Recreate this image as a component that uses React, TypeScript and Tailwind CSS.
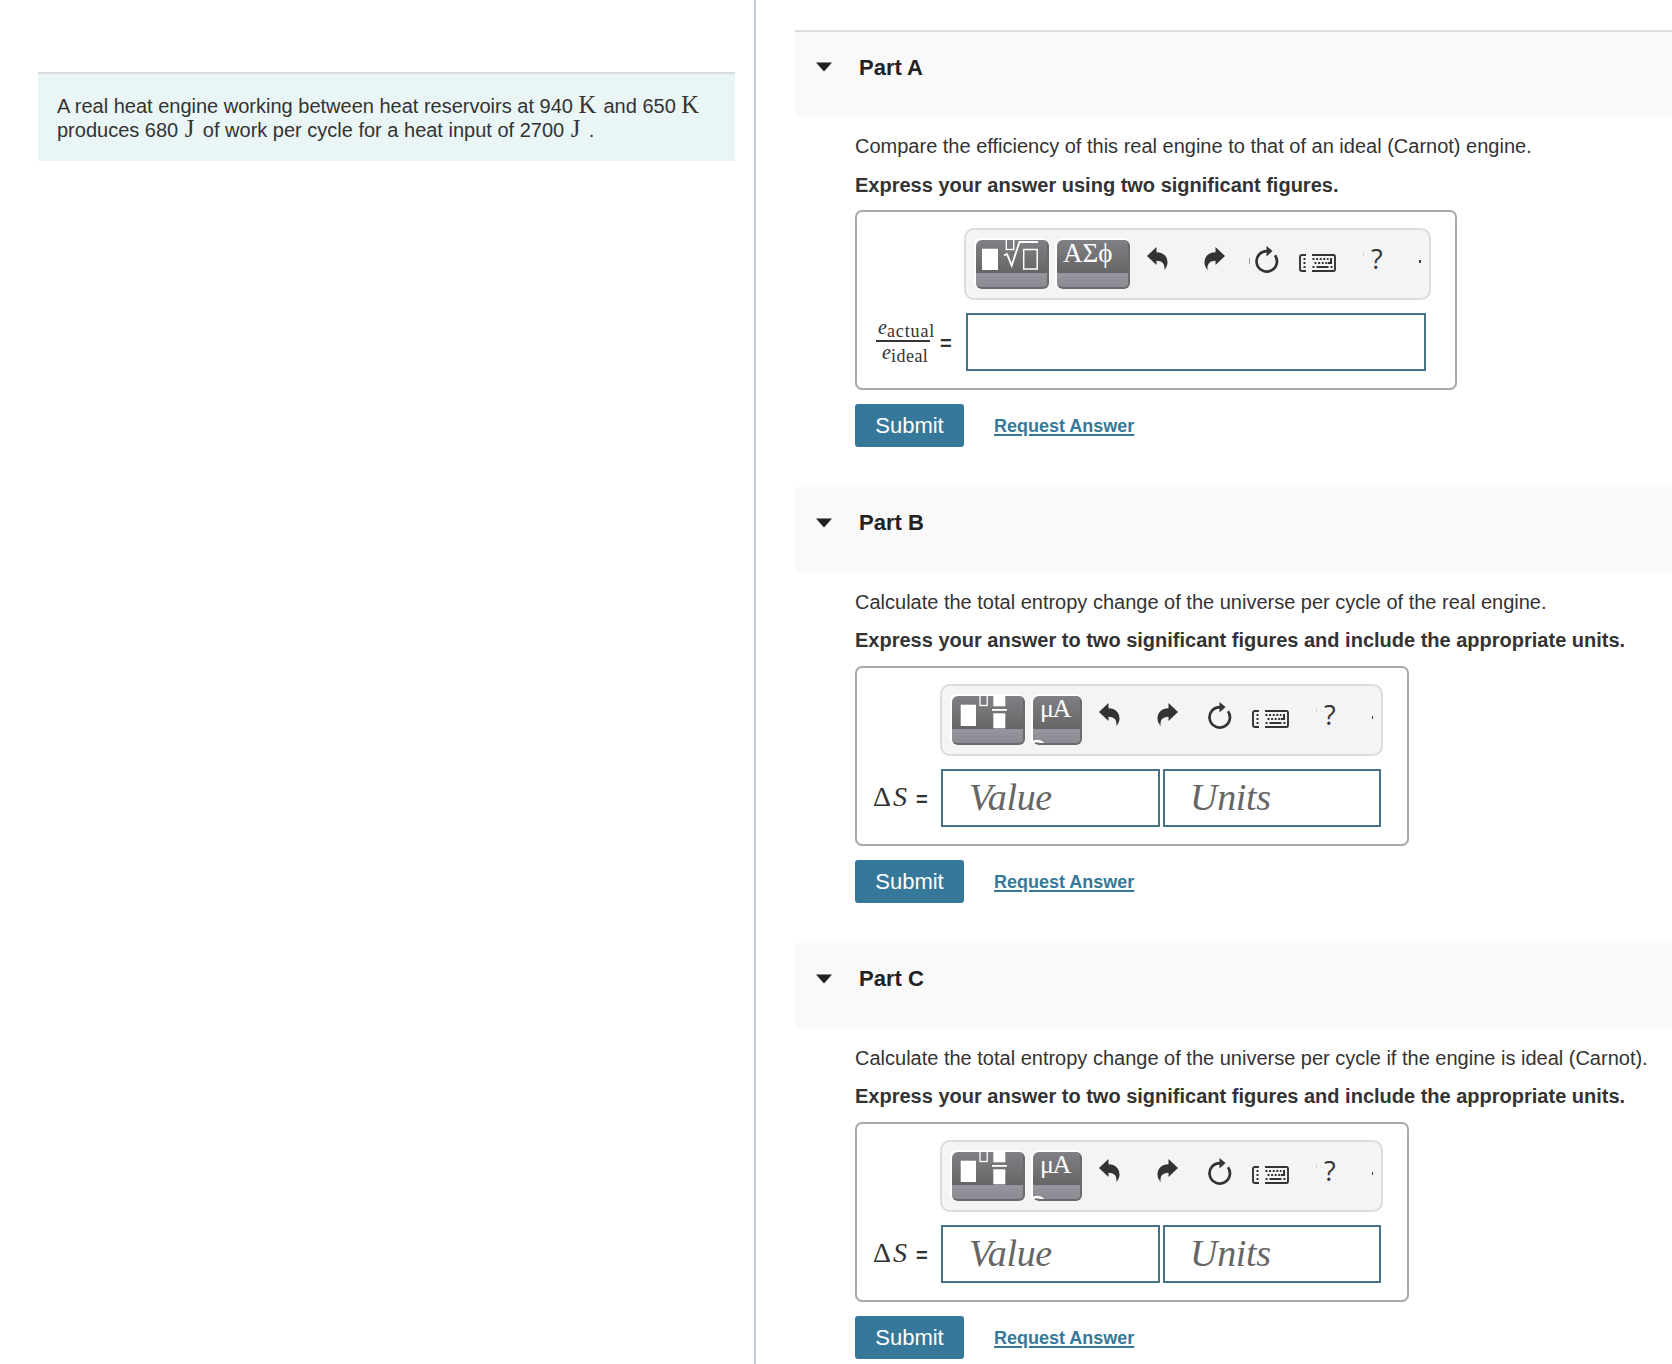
import type {ReactNode} from "react";

function UndoIcon({flip}: { flip?: boolean }) {
    return (
        <svg width="21" height="24" viewBox="0 0 21 24" className={flip ? "-scale-x-100" : ""}>
            <path d="M0 9 9.500 0v5.200C16.500 5.200 20.500 9.500 20.500 15.500c0 3-1.200 5.200-3.200 7.500 1-5.500-1.700-9.200-7.800-9.200V18z" fill="#333"/>
        </svg>
    );
}

function ResetIcon() {
    return (
        <svg width="24" height="27" viewBox="0 0 24 27">
            <path d="M20 9.300A10.200 10.200 0 1 1 12.500 5.100" fill="none" stroke="#333" strokeWidth="2.700"/>
            <path d="M11.500 0 17.500 5 11.500 10.500z" fill="#333"/>
        </svg>
    );
}

function KeyboardIcon() {
    return (
        <svg width="37" height="18" viewBox="0 0 37 18" fill="#333">
            <path d="M7 1H3Q1 1 1 3v12q0 2 2 2h4M13 1h21.500q1.500 0 1.500 2v12q0 2-1.500 2H13" fill="none" stroke="#333" strokeWidth="1.900"/>
            <path d="M4.500 4h2v2h-2zM4.500 8h2v2h-2zM4.500 12h2v2h-2zM13.500 12h2v2h-2zM17.500 12h12v2h-12zM31.500 12h2v2h-2z"/>
            <path d="M13.500 5h16M15.500 9h14" stroke="#333" strokeWidth="2" strokeDasharray="2 1.600"/>
            <path d="M31 4h2v6h-4V8h2z"/>
        </svg>
    );
}

function ToolButton({wide, children}: { wide?: boolean; children: ReactNode }) {
    return (
        <button className={(wide ? "w-[73px]" : "w-[49px]") + " relative flex h-[49px] shrink-0 items-start rounded-[6px] border-r-2 border-b-2 border-[#6a6a6c] bg-[linear-gradient(#818185_0,#656567_33px,#97969f_33px,#8b8a93_100%)] font-['Liberation_Serif',serif] text-white shadow-[-1px_-1px_0_1px_#fff]"}>
            {children}
        </button>
    );
}

function RootIcon() {
    return (
        <svg width="71" height="47" viewBox="0 0 71 47" fill="none" stroke="#fff" className="block shrink-0">
            <rect x="6" y="8.700" width="16" height="21.300" fill="#fff" stroke="none"/>
            <rect x="30.300" y="-3" width="7.400" height="12.500" strokeWidth="1.400"/>
            <path d="M28 15.500l3-1.500 4.700 11.500L43.500 2H62" strokeWidth="1.900"/>
            <rect x="47.700" y="9.500" width="13.500" height="19.500" strokeWidth="1.500"/>
        </svg>
    );
}

function FractionIcon() {
    return (
        <svg width="71" height="47" viewBox="0 0 71 47" fill="#fff" className="block shrink-0">
            <rect x="8.700" y="8.700" width="15.300" height="21.300"/>
            <rect x="28" y="-3" width="7.200" height="12.500" fill="none" stroke="#fff" strokeWidth="1.300"/>
            <rect x="41.300" y="0" width="12" height="10.300"/>
            <rect x="40" y="13" width="15" height="1.800"/>
            <rect x="41.300" y="17.300" width="12" height="15"/>
        </svg>
    );
}

function Toolbar({units}: { units?: boolean }) {
    return (
        <div className={(units ? "w-[443px]" : "w-[467px]") + " flex h-[72px] rounded-[10px] border-2 border-[#dcdcdc] bg-[#f4f4f4] pt-[10px] pl-[10px]"}>
            <ToolButton wide>{units ? <FractionIcon/> : <RootIcon/>}</ToolButton>
            <div className="w-2 shrink-0"/>
            {units ? (
                <ToolButton>
                    <div className="pl-[7px] text-[26px] leading-[25px] tracking-[-1.5px]">μA</div>
                    <svg width="12" height="4" viewBox="0 0 12 4" className="absolute bottom-0 left-0">
                        <path d="M0 1.500Q7-1 11.500 4H7Q4 2.500 0 4z" fill="#fff"/>
                    </svg>
                </ToolButton>
            ) : (
                <ToolButton wide>
                    <div className="pl-[6px] text-[27px] leading-[26px]">ΑΣϕ</div>
                </ToolButton>
            )}
            <div className="flex shrink-0 pt-[7px]">
                <div className="ml-[17px]"><UndoIcon/></div>
                <div className={units ? "ml-[37px]" : "ml-9"}><UndoIcon flip/></div>
                <div className={(units ? "bg-transparent" : "bg-[#999]") + " mt-[11px] ml-6 h-[6px] w-px"}/>
                <div className="-mt-px ml-[5px]"><ResetIcon/></div>
                <div className="mt-[7px] ml-[20px]"><KeyboardIcon/></div>
                <div className="mt-[6px] ml-[27px] h-[3px] w-px bg-[#ccc]"/>
                <div className="ml-[7px] font-['Open_Sans',sans-serif] text-[27px] leading-[24px] text-[#333]">?</div>
                <div className={(units ? "w-px" : "w-[2px]") + " mt-[13px] ml-[36px] h-[3px] bg-[#444]"}/>
            </div>
        </div>
    );
}

function Field({label}: { label: string }) {
    return (
        <div className={(label === "Value" ? "w-[219px] pl-[26px]" : "w-[218px] pl-[25px]") + " h-[58px] border-2 border-[#45738a] font-['Liberation_Serif',serif] text-[38px] leading-[52px] tracking-[-0.3px] text-[#666] italic"}>
            {label}
        </div>
    );
}

function Efficiency({sub}: { sub: string }) {
    return (
        <>
            <i className="text-[20px]">e</i>
            <span className={(sub === "ideal" ? "tracking-[0.5px]" : "tracking-[0.9px]") + " align-[-3px] text-[18px] leading-[0]"}>{sub}</span>
        </>
    );
}

function Part({name, question, hint, units}: { name: string; question: string; hint: string; units?: boolean }) {
    return (
        <section className={units ? "mt-px h-[455px]" : "h-[456px]"}>
            <div className={(units ? "h-[86px] pt-px" : "h-[87px] border-t-2 border-[#dcdcdc]") + " flex items-start bg-[#f9f9f9] pl-[21px]"}>
                <svg width="16" height="10" viewBox="0 0 16 10" className="mt-[30px]">
                    <path d="M0 .5h16L8 9.500z" fill="#222"/>
                </svg>
                <h2 className={(units ? "pt-[20px]" : "pt-[21px]") + " ml-[27px] text-[22px] leading-[30px] font-bold text-[#222]"}>{name}</h2>
            </div>
            <div className="pl-[60px] whitespace-nowrap text-[#333]">
                <p className="pt-[17px] text-[20px] leading-[24px]">{question}</p>
                <p className={(units ? "pt-[14px] pb-px" : "pt-[15px]") + " text-[20px] leading-[24px] font-bold"}>{hint}</p>
                <div className={(units ? "w-[554px] pl-[83px]" : "w-[602px] pl-[107px]") + " relative mt-[13px] h-[180px] rounded-[7px] border-2 border-[#a8a8a8] pt-[16px]"}>
                    <Toolbar units={units}/>
                    {units ? (
                        <div className="mt-[13px] ml-px flex gap-[3px]">
                            <div className="absolute left-[16px] flex pt-[11px] font-['Liberation_Serif',serif] text-[28px] leading-[34px]">
                                <span>Δ</span>
                                <i className="ml-[2px]">S</i>
                                <span className="ml-[9px] pt-[2px] font-['Liberation_Sans',sans-serif] text-[20px] font-bold">=</span>
                            </div>
                            <Field label="Value"/>
                            <Field label="Units"/>
                        </div>
                    ) : (
                        <div className="mt-[13px] ml-[2px] flex">
                            <div className="absolute left-[19px] flex items-center pt-1 font-['Liberation_Serif',serif]">
                                <div className="w-[54px] text-[20px] leading-[20px]">
                                    <div className="h-[25px] border-b-2 border-[#333] pl-[2px]"><Efficiency sub="actual"/></div>
                                    <div className="h-[24px] pl-[6px]"><Efficiency sub="ideal"/></div>
                                </div>
                                <span className="ml-[10px] pt-[2px] font-['Liberation_Sans',sans-serif] text-[20px] font-bold">=</span>
                            </div>
                            <input className="h-[58px] w-[460px] border-2 border-[#45738a] bg-white px-4 text-[24px] outline-none"/>
                        </div>
                    )}
                </div>
                <div className="mt-[14px] flex items-center">
                    <button className="h-[43px] w-[109px] rounded-[3px] bg-[#36789a] text-[22px] text-white">Submit</button>
                    <a href="#" className="ml-[30px] pt-[2px] text-[18px] font-bold text-[#36789a] underline decoration-2 underline-offset-2">Request Answer</a>
                </div>
            </div>
        </section>
    );
}

function Unit({name}: { name: string }) {
    return (
        <span className={(name === "K" ? "w-[19.5px]" : "w-[13.5px] pl-px") + " inline-block font-['Liberation_Serif',serif] text-[24.5px] leading-[20px]"}>
            {name}
        </span>
    );
}

export default function App() {
    return (
        <div className="flex h-[1364px] w-[1672px] overflow-hidden bg-white font-['Liberation_Sans',sans-serif]">
            <aside className="w-[756px] shrink-0 border-r-2 border-[#c0cbdb] pt-[72px] pl-[38px]">
                <div className="h-[89px] w-[697px] border-t-2 border-[#dadddd] bg-[#eaf5f5] pt-[20px] pl-[19px] text-[20px] leading-[24px] whitespace-nowrap text-[#333]">
                    A real heat engine working between heat reservoirs at 940 <Unit name="K"/> and 650 <Unit name="K"/><br/>
                    produces 680 <Unit name="J"/> of work per cycle for a heat input of 2700 <Unit name="J"/> .
                </div>
            </aside>
            <main className="flex-1 pt-[30px] pl-[39px]">
                <Part
                    name="Part A"
                    question="Compare the efficiency of this real engine to that of an ideal (Carnot) engine."
                    hint="Express your answer using two significant figures."
                />
                <Part
                    name="Part B"
                    question="Calculate the total entropy change of the universe per cycle of the real engine."
                    hint="Express your answer to two significant figures and include the appropriate units."
                    units
                />
                <Part
                    name="Part C"
                    question="Calculate the total entropy change of the universe per cycle if the engine is ideal (Carnot)."
                    hint="Express your answer to two significant figures and include the appropriate units."
                    units
                />
            </main>
        </div>
    )
}
